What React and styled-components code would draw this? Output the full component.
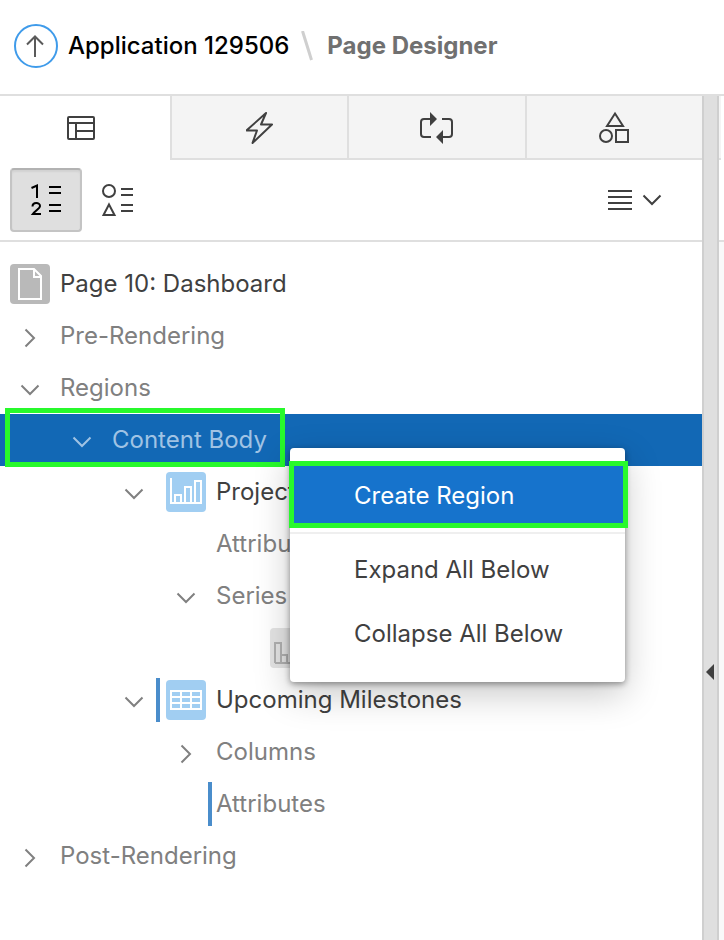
import React from "react";
import styled, { createGlobalStyle, css } from "styled-components";

const GlobalStyle = createGlobalStyle`
  *, *::before, *::after { box-sizing: border-box; }
  html, body, #root { height: 100%; }
  body {
    margin: 0;
    background: #fff;
    color: #404040;
    font-family: Inter, "Liberation Sans", sans-serif;
    font-size: 24px;
    line-height: 32px;
  }
  button {
    margin: 0;
    padding: 0;
    border: 0;
    background: none;
    color: inherit;
    font: inherit;
    cursor: pointer;
  }
  svg { display: block; flex: none; }
`;

const Page = styled.div`
  display: flex;
  flex-direction: column;
  min-height: 100%;
  overflow: hidden;
`;

const Header = styled.header`
  display: flex;
  align-items: center;
  height: 96px;
  padding: 0 14px 2px;
  border-bottom: 2px solid #dfdfdf;
`;

const UpLink = styled.a`
  display: grid;
  place-items: center;
  width: 44px;
  height: 44px;
  margin-right: 10px;
  border: 2px solid #3f9bea;
  border-radius: 50%;
  color: #5a5a5a;
`;

const AppLink = styled.a`
  color: #000;
  font-weight: 500;
  text-decoration: none;
`;

const Slash = styled.svg`
  margin: 0 14px 0 12px;
`;

const Title = styled.h1`
  margin: 0;
  color: #707070;
  font-size: 24px;
  line-height: 32px;
  font-weight: 700;
`;

const Workspace = styled.div`
  display: flex;
  flex: 1;
`;

const Panel = styled.main`
  flex: 1;
  min-width: 0;
`;

const Tabs = styled.div`
  display: grid;
  grid-template-columns: 170fr repeat(3, 177fr);
  height: 64px;
`;

const Tab = styled.button`
  display: grid;
  place-items: center;
  color: #404040;
  ${(p) =>
    p["aria-selected"]
      ? css`
          padding-right: 8px;
          background: #fff;
        `
      : css`
          border-left: 2px solid #dfdfdf;
          border-bottom: 2px solid #dfdfdf;
          background: #f4f4f4;
        `}
`;

const Toolbar = styled.div`
  display: flex;
  align-items: center;
  height: 82px;
  padding: 0 40px 0 10px;
  border-bottom: 2px solid #dfdfdf;
`;

const ViewButton = styled.button`
  display: grid;
  place-items: center;
  width: 72px;
  height: 64px;
  border-radius: 4px;
  color: #404040;
  ${(p) =>
    p["aria-pressed"] &&
    css`
      border: 2px solid #c4c4c4;
      border-top-color: #b2b2b2;
      background: #dfdfdf;
      box-shadow: inset 0 2px 2px rgba(0, 0, 0, 0.06);
      color: #000;
    `}
`;

const MenuButton = styled.button`
  display: flex;
  align-items: center;
  gap: 10px;
  height: 64px;
  margin-left: auto;
  color: #404040;
`;

const Tree = styled.ul`
  margin: 0;
  padding: 16px 0;
  list-style: none;
`;

const Row = styled.li`
  position: relative;
  display: flex;
  align-items: center;
  height: 52px;
  padding-left: ${(p) => p.$level * 52 + 8}px;
  color: ${(p) => (p.$strong ? "#404040" : "#808080")};
  white-space: nowrap;
  ${(p) =>
    p.$selected &&
    css`
      z-index: 1;
      background: #1268b5;
      color: #a0c3e4;
    `}
`;

const Toggle = styled.button`
  display: grid;
  place-items: center;
  width: 44px;
  height: 44px;
  padding-top: 4px;
  color: ${(p) => (p.$onSelected ? "#a0c3e4" : "#808080")};
`;

const ToggleSpace = styled.span`
  width: 44px;
`;

const Marker = styled.span`
  width: 4px;
  height: 44px;
  margin-right: 4px;
  background: ${(p) => (p.$on ? "#4a8dcb" : "transparent")};
`;

const tileColors = { grey: "#b9b9b9", blue: "#a1cef2", pale: "#e4e4e4" };

const Tile = styled.span`
  width: 40px;
  height: 40px;
  margin: 0 10px 0 2px;
  border-radius: 4px;
  background: ${(p) => tileColors[p.$tone]};
  color: ${(p) => (p.$tone === "pale" ? "#b0b0b0" : "#fff")};
`;

const Label = styled.span`
  font-weight: 400;
`;

const Highlight = styled.span`
  position: absolute;
  inset: ${(p) => p.$inset};
  width: ${(p) => p.$width || "auto"};
  border: 5px solid #28f92c;
  pointer-events: none;
`;

const Menu = styled.div`
  position: absolute;
  top: 34px;
  left: 290px;
  display: flex;
  flex-direction: column;
  width: 335px;
  padding: 16px 0;
  border-radius: 4px;
  background: #fff;
  box-shadow: 0 2px 6px rgba(0, 0, 0, 0.4), 0 12px 36px rgba(0, 0, 0, 0.22);
`;

const MenuItem = styled.button`
  position: relative;
  height: 64px;
  padding-left: 64px;
  text-align: left;
  color: ${(p) => (p.$active ? "#fff" : "#404040")};
  background: ${(p) => (p.$active ? "#1673cc" : "transparent")};
`;

const Separator = styled.hr`
  width: 100%;
  height: 2px;
  margin: 4px 0;
  border: 0;
  background: #efefef;
`;

const Splitter = styled.div`
  display: flex;
  align-items: center;
  width: 17px;
  border: solid #cfcfcf;
  border-width: 0 2px;
  background: #dfdfdf;
`;

const CollapseButton = styled.button`
  display: grid;
  place-items: center end;
  width: 10px;
  height: 48px;
  margin-top: 308px;
`;

const NextPanel = styled.div`
  display: flex;
  flex-direction: column;
  width: 5px;
  background: #f9f9f9;
`;

const NextTabs = styled.div`
  width: 2px;
  height: 64px;
  border-bottom: 2px solid #dfdfdf;
  background: #f4f4f4;
`;

const NextTop = styled.div`
  height: 146px;
  border-bottom: 2px solid #dfdfdf;
  background: #fff;
`;

const Icon = ({ w, h, sw = 2, children, ...rest }) => (
  <svg
    width={w}
    height={h}
    viewBox={`0 0 ${w} ${h}`}
    fill="none"
    stroke="currentColor"
    strokeWidth={sw}
    aria-hidden="true"
    {...rest}
  >
    {children}
  </svg>
);

const ArrowUp = () => (
  <Icon w={20} h={22}>
    <path d="M9 22V1.500M1 9.500l8-8 8 8" />
  </Icon>
);
const LayoutIcon = () => (
  <Icon w={28} h={24}>
    <rect x="1" y="1" width="26" height="22" rx="1" />
    <path d="M1 7h26M9 7v16M9 15h18" />
  </Icon>
);
const BoltIcon = () => (
  <Icon w={28} h={34} strokeLinejoin="round">
    <path d="M20 3L.500 20.500H11L6.500 33 26 14.500H15z" />
  </Icon>
);
const LoopIcon = () => (
  <Icon w={34} h={34}>
    <path d="M11 27H4q-3 0-3-3V12q0-3 3-3h8M22 9h7q3 0 3 3v12q0 3-3 3h-8" />
    <path d="M10 2l7 7-7 7zM23 20l-7 7 7 7z" fill="currentColor" stroke="none" />
  </Icon>
);
const ShapesIcon = () => (
  <Icon w={30} h={32}>
    <path d="M16 2.500L24 15H8zM17 19h12v12H17z" />
    <circle cx="7" cy="25" r="6" />
  </Icon>
);
const NumberedIcon = () => (
  <Icon w={32} h={34}>
    <path d="M1.500 5L7 2.500V15" />
    <path d="M2.500 23.500c0-4.500 7.500-4.500 7.500-.500 0 2.500-4.500 4.500-7.200 8H11" />
    <path d="M19 4h12M19 10h12M19 22h12M19 28h12" />
  </Icon>
);
const ShapeListIcon = () => (
  <Icon w={32} h={34}>
    <circle cx="7" cy="8" r="6" />
    <path d="M7 21.500L12.500 32h-11z" />
    <path d="M19 6h12M19 12h12M19 22h12M19 28h12" />
  </Icon>
);
const LinesIcon = () => (
  <Icon w={24} h={20}>
    <path d="M0 1h24M0 7h24M0 13h24M0 19h24" />
  </Icon>
);
const ChevronDown = () => (
  <Icon w={20} h={12}>
    <path d="M1.500 1.500L10 10l8.500-8.500" />
  </Icon>
);
const ChevronRight = () => (
  <Icon w={12} h={20}>
    <path d="M1.500 1.500L10 10l-8.500 8.500" />
  </Icon>
);

const tileDrawings = {
  page: <path d="M9 5h15l7 7v23H9zM24 5v8h7" />,
  chart: <path d="M5 6v25h30V9h-6v22M19 31V15h6v16M9 31v-8h6v8" />,
  grid: <path d="M5 11h30v18H5zM5 17h30M5 23h30M15 11v18M25 11v18" />,
  series: <path d="M5 35V15h6v20M11 27h6v8M23 35V19h6v16M5 35h30" />,
};

const TileIcon = ({ name, tone }) => (
  <Tile $tone={tone}>
    <Icon w={40} h={40}>{tileDrawings[name]}</Icon>
  </Tile>
);

const rows = [
  { label: "Pre-Rendering", level: 0, open: false },
  { label: "Regions", level: 0, open: true },
  { label: "Content Body", level: 1, open: true, selected: true },
  { label: "Project", level: 2, open: true, strong: true, icon: "chart", tone: "blue" },
  { label: "Attributes", level: 3 },
  { label: "Series", level: 3, open: true },
  { label: "", level: 4, icon: "series", tone: "pale" },
  { label: "Upcoming Milestones", level: 2, open: true, strong: true, icon: "grid", tone: "blue", changed: true },
  { label: "Columns", level: 3, open: false },
  { label: "Attributes", level: 3, changed: true },
  { label: "Post-Rendering", level: 0, open: false },
];

const ContextMenu = () => (
  <Menu role="menu">
    <MenuItem role="menuitem" $active>
      Create Region
      <Highlight $inset="-3px -3px 0 -1px" />
    </MenuItem>
    <Separator />
    <MenuItem role="menuitem">Expand All Below</MenuItem>
    <MenuItem role="menuitem">Collapse All Below</MenuItem>
  </Menu>
);

const TreeRow = ({ label, level, open, selected, strong, icon, tone, changed }) => (
  <Row
    role="treeitem"
    aria-level={level + 2}
    aria-expanded={open}
    aria-selected={!!selected}
    $level={level}
    $selected={selected}
    $strong={strong}
  >
    {open === undefined ? (
      <ToggleSpace />
    ) : (
      <Toggle $onSelected={selected} aria-label={`${open ? "Collapse" : "Expand"} ${label}`}>
        {open ? <ChevronDown /> : <ChevronRight />}
      </Toggle>
    )}
    <Marker $on={changed} />
    {icon && <TileIcon name={icon} tone={tone} />}
    <Label>{label}</Label>
    {selected && <Highlight $inset="-6px auto -1px 5px" $width="280px" />}
    {selected && <ContextMenu />}
  </Row>
);

export default function App() {
  return (
    <Page>
      <GlobalStyle />
      <Header>
        <UpLink href="#up" aria-label="Up"><ArrowUp /></UpLink>
        <AppLink href="#application">Application 129506</AppLink>
        <Slash width="12" height="30" viewBox="0 0 12 30" aria-hidden="true">
          <path d="M1.500 0L10.500 29" stroke="#cfcfcf" strokeWidth="3" />
        </Slash>
        <Title>Page Designer</Title>
      </Header>
      <Workspace>
        <Panel>
          <Tabs role="tablist">
            <Tab role="tab" aria-selected={true} aria-label="Rendering"><LayoutIcon /></Tab>
            <Tab role="tab" aria-selected={false} aria-label="Dynamic Actions"><BoltIcon /></Tab>
            <Tab role="tab" aria-selected={false} aria-label="Processing"><LoopIcon /></Tab>
            <Tab role="tab" aria-selected={false} aria-label="Shared Components"><ShapesIcon /></Tab>
          </Tabs>
          <Toolbar>
            <ViewButton aria-pressed={true} aria-label="Group by processing order"><NumberedIcon /></ViewButton>
            <ViewButton aria-pressed={false} aria-label="Group by component type"><ShapeListIcon /></ViewButton>
            <MenuButton aria-label="Menu"><LinesIcon /><ChevronDown /></MenuButton>
          </Toolbar>
          <Tree role="tree">
            <Row role="treeitem" aria-level={1} $level={0} $strong>
              <TileIcon name="page" tone="grey" />
              <Label>Page 10: Dashboard</Label>
            </Row>
            {rows.map((row, i) => <TreeRow key={i} {...row} />)}
          </Tree>
        </Panel>
        <Splitter>
          <CollapseButton aria-label="Collapse panel">
            <svg width="8" height="16" viewBox="0 0 8 16" aria-hidden="true">
              <path d="M8 0v16L0 8z" fill="#404040" />
            </svg>
          </CollapseButton>
        </Splitter>
        <NextPanel>
          <NextTop><NextTabs /></NextTop>
        </NextPanel>
      </Workspace>
    </Page>
  );
}
